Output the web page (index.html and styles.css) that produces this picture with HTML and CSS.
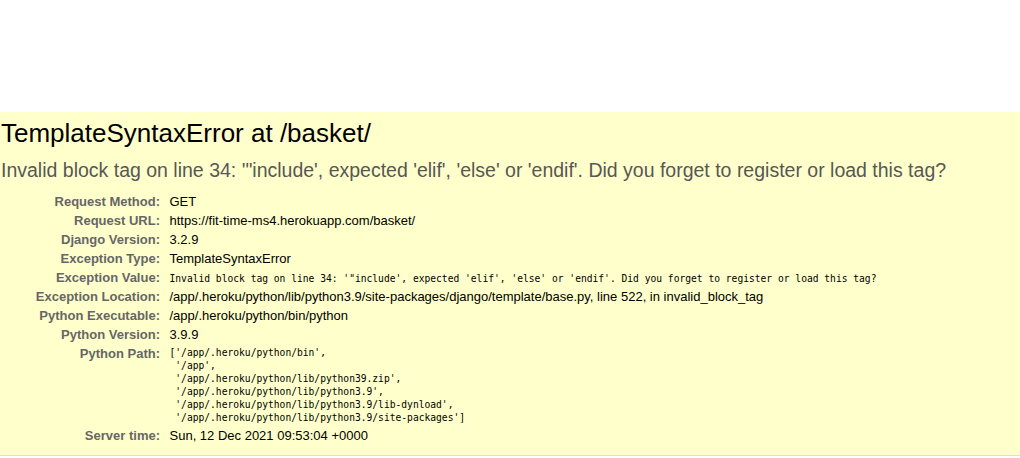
FILE: index.html
```html
<!DOCTYPE html>
<html lang="en">
<head>
<meta charset="utf-8">
<title>TemplateSyntaxError at /basket/</title>
<link rel="stylesheet" href="styles.css">
</head>
<body>
<div class="top-space"></div>
<div class="summary">
  <h1 class="title">TemplateSyntaxError at /basket/</h1>
  <pre class="exception-value">Invalid block tag on line 34: '"include', expected 'elif', 'else' or 'endif'. Did you forget to register or load this tag?</pre>
  <table class="meta">
    <tbody>
      <tr><th>Request Method:</th><td>GET</td></tr>
      <tr><th>Request URL:</th><td>https://fit-time-ms4.herokuapp.com/basket/</td></tr>
      <tr><th>Django Version:</th><td>3.2.9</td></tr>
      <tr><th>Exception Type:</th><td>TemplateSyntaxError</td></tr>
      <tr><th>Exception Value:</th><td><pre class="mono mono-single">Invalid block tag on line 34: '"include', expected 'elif', 'else' or 'endif'. Did you forget to register or load this tag?</pre></td></tr>
      <tr><th>Exception Location:</th><td>/app/.heroku/python/lib/python3.9/site-packages/django/template/base.py, line 522, in invalid_block_tag</td></tr>
      <tr><th>Python Executable:</th><td>/app/.heroku/python/bin/python</td></tr>
      <tr><th>Python Version:</th><td>3.9.9</td></tr>
      <tr><th>Python Path:</th><td><pre class="mono">['/app/.heroku/python/bin',
 '/app',
 '/app/.heroku/python/lib/python39.zip',
 '/app/.heroku/python/lib/python3.9',
 '/app/.heroku/python/lib/python3.9/lib-dynload',
 '/app/.heroku/python/lib/python3.9/site-packages']</pre></td></tr>
      <tr><th>Server time:</th><td>Sun, 12 Dec 2021 09:53:04 +0000</td></tr>
    </tbody>
  </table>
</div>
</body>
</html>
```

FILE: styles.css
```css
html, body {
  margin: 0;
  padding: 0;
}

body {
  font-family: "Liberation Sans", Arial, sans-serif;
  font-size: 13px;
  color: #000;
  background: #fff;
}

.top-space {
  height: 112px;
}

.summary {
  background: #ffc;
  padding: 6px 0 10px 1px;
  border-bottom: 1px solid #ddd;
}

.title {
  margin: 0;
  font-size: 26px;
  font-weight: normal;
  line-height: 30px;
}

.exception-value {
  margin: 11px 0 11px;
  font-family: "Liberation Sans", Arial, sans-serif;
  font-size: 19.5px;
  line-height: 22px;
  color: #575757;
  white-space: pre-wrap;
}

.meta {
  border: none;
  border-collapse: collapse;
  background: transparent;
}

.meta th,
.meta td {
  vertical-align: top;
  padding: 2px 3px;
  line-height: 15px;
}

.meta th {
  width: 156px;
  text-align: right;
  color: #666;
  font-weight: bold;
  padding-right: 6.5px;
}

.meta td {
  color: #000;
}

.mono {
  margin: 0;
  font-family: "DejaVu Sans Mono", monospace;
  font-size: 9.65px;
  line-height: 13px;
  white-space: pre-wrap;
}

.mono-single {
  line-height: 15px;
  padding-top: 1px;
  margin-bottom: -1px;
}
```
